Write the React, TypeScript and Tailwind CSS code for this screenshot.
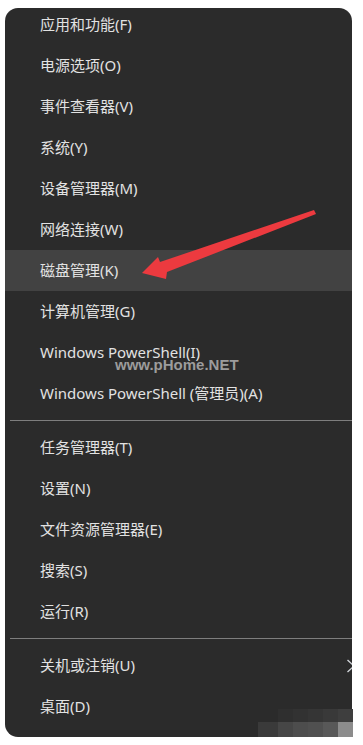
import React from "react";

type Item = { label: string; active?: boolean; chevron?: boolean };

const group1: Item[] = [
  { label: "应用和功能(F)" },
  { label: "电源选项(O)" },
  { label: "事件查看器(V)" },
  { label: "系统(Y)" },
  { label: "设备管理器(M)" },
  { label: "网络连接(W)" },
  { label: "磁盘管理(K)", active: true },
  { label: "计算机管理(G)" },
  { label: "Windows PowerShell(I)" },
  { label: "Windows PowerShell (管理员)(A)" },
];
const group2: Item[] = [
  { label: "任务管理器(T)" },
  { label: "设置(N)" },
  { label: "文件资源管理器(E)" },
  { label: "搜索(S)" },
  { label: "运行(R)" },
];
const group3: Item[] = [{ label: "关机或注销(U)", chevron: true }, { label: "桌面(D)" }];

function Row({ item }: { item: Item }) {
  return (
    <div
      className={
        "relative flex h-[41px] items-center pl-[35px] text-[15px] text-[#e2e2e2] " +
        (item.active ? "bg-[#424242]" : "")
      }
    >
      <span>{item.label}</span>
      {item.chevron && (
        <svg
          className="absolute right-[-4px] top-[14px]"
          width="10"
          height="14"
          viewBox="0 0 10 14"
          fill="none"
        >
          <path d="M1.5 1 L8 7 L1.5 13" stroke="#cfd3d8" strokeWidth="1.4" />
        </svg>
      )}
    </div>
  );
}

function Sep() {
  return (
    <div className="py-[6px] pl-[5px]">
      <div className="h-px bg-[#7e7e7e]" />
    </div>
  );
}

export default function App() {
  const mosaicTop = ["#2b2b2b", "#2f2f2f", "#323232", "#353535", "#393939", "#3e3e3e"];
  const mosaicBottom = ["#3a3a3a", "#464646", "#4d4d4d", "#505050", "#585858", "#8c8c8c"];
  const widths = [20, 15, 15, 15, 15, 15];
  return (
    <div
      className="relative h-[745px] w-[363px] overflow-hidden bg-white"
      style={{ fontFamily: '"Noto Sans", "Noto Sans CJK SC", sans-serif' }}
    >
      <div className="relative ml-[5px] mt-[8px] h-[729px] w-[347px] overflow-hidden rounded-[13px] bg-[#2b2b2b]">
        <div className="-mt-[4px] flex flex-col">
          {group1.map((it) => (
            <Row key={it.label} item={it} />
          ))}
          <Sep />
          {group2.map((it) => (
            <Row key={it.label} item={it} />
          ))}
          <Sep />
          {group3.map((it) => (
            <Row key={it.label} item={it} />
          ))}
        </div>
        <div
          className="absolute left-[110px] top-[349px] text-[15px] font-bold leading-none text-[#9c9c9c]"
          style={{ fontFamily: '"Liberation Sans", Arial, sans-serif' }}
        >
          www.pHome.NET
        </div>
      </div>

      <div className="absolute left-[258px] top-[709px] flex flex-col">
        <div className="flex h-[13px]">
          {mosaicTop.map((c, i) => (
            <div key={i} className="h-full" style={{ width: widths[i], background: c }} />
          ))}
        </div>
        <div className="flex h-[15px]">
          {mosaicBottom.map((c, i) => (
            <div key={i} className="h-full" style={{ width: widths[i], background: c }} />
          ))}
        </div>
      </div>

      <svg className="absolute left-0 top-0" width="363" height="745" viewBox="0 0 363 745">
        <polygon
          points="142,273 158,257 160,262 314,210 316,214 167,272 166,279"
          fill="#ec3a3f"
        />
      </svg>
    </div>
  );
}
